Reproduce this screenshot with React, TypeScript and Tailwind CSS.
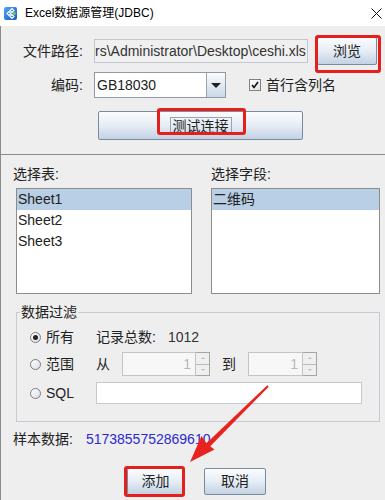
import clsx from "clsx";
import type { ReactNode } from "react";

const font = "font-['Liberation_Sans','Noto_Sans_CJK_SC',sans-serif]";

function Btn({ children, className }: { children: ReactNode; className?: string }) {
  return (
    <div
      className={clsx(
        "flex items-center justify-center border border-[#7b8b9e] rounded-[2px] bg-gradient-to-b from-[#fbfcfd] via-[#e6edf5] to-[#c3d2e4] text-[14px] text-[#222]",
        className
      )}
    >
      {children}
    </div>
  );
}

function Radio({ checked }: { checked?: boolean }) {
  return (
    <span className="w-[11px] h-[11px] rounded-full border border-[#7d7d7d] bg-gradient-to-br from-white to-[#d8dde6] flex items-center justify-center shrink-0">
      {checked && <span className="w-[5px] h-[5px] rounded-full bg-[#222]" />}
    </span>
  );
}

function Spinner({ width }: { width: string }) {
  return (
    <div className={clsx("flex h-[24px]", width)}>
      <div className="flex-1 border border-[#c4c4c4] bg-[#f7f7f7] flex items-center justify-end pr-[4px] text-[14px] text-[#b8b8b8]">
        1
      </div>
      <div className="w-[14px] flex flex-col border border-l-0 border-[#a6a6a6]">
        <div className="flex-1 bg-[#efefef] border-b border-[#b8b8b8] flex items-center justify-center">
          <span className="w-0 h-0 border-x-[2px] border-x-transparent border-b-[2px] border-b-[#c0c0c0]" />
        </div>
        <div className="flex-1 bg-[#efefef] flex items-center justify-center">
          <span className="w-0 h-0 border-x-[2px] border-x-transparent border-t-[2px] border-t-[#c0c0c0]" />
        </div>
      </div>
    </div>
  );
}

export default function App() {
  return (
    <div className={clsx("relative w-[385px] h-[500px] overflow-hidden bg-[#eeeeee] text-[#222] flex flex-col", font)}>
      {/* Title bar */}
      <div className="h-[26px] bg-white flex items-center shrink-0">
        <svg width="13" height="13" viewBox="0 0 13 13" className="ml-[4px]">
          <defs>
            <linearGradient id="ic" x1="0" y1="0" x2="1" y2="1">
              <stop offset="0" stopColor="#4aa8f5" />
              <stop offset="1" stopColor="#1658c8" />
            </linearGradient>
          </defs>
          <rect x="0" y="0" width="13" height="13" rx="2" fill="url(#ic)" />
          <path d="M3 6.5 L5 4.5 L7 6.5 L5 8.5 Z M6 3.5 L8 1.5 L10 3.5 L8 5.5 Z M6 9.5 L8 7.5 L10 9.5 L8 11.5 Z" fill="none" stroke="white" strokeWidth="1.1" />
          <circle cx="10.3" cy="6.5" r="1.4" fill="#86cc45" />
        </svg>
        <span className="ml-[8px] text-[12px] text-black">Excel数据源管理(JDBC)</span>
        <svg width="11" height="11" viewBox="0 0 11 11" className="ml-auto mr-[3px]">
          <path d="M0.5 0.5 L10.5 10.5 M10.5 0.5 L0.5 10.5" stroke="#111" strokeWidth="1" />
        </svg>
      </div>

      <div className="flex-1 flex flex-col border-l border-[#8a8a8a]">
        {/* File path row */}
        <div className="flex items-center h-[28px] mt-[11px]">
          <span className="w-[82px] text-right text-[14px]">文件路径:</span>
          <div className="ml-[11px] w-[214px] h-[24px] border border-[#c2c8cf] bg-[#f0f0f0] flex items-center overflow-hidden whitespace-nowrap text-[14px] text-[#333]">
            rs\Administrator\Desktop\ceshi.xls
          </div>
          <Btn className="ml-[9px] w-[60px] h-[28px]">浏览</Btn>
        </div>

        {/* Encoding row */}
        <div className="flex items-center h-[26px] mt-[7px]">
          <span className="w-[82px] text-right text-[14px]">编码:</span>
          <div className="ml-[11px] w-[132px] h-[26px] flex border border-[#8f9aa8] bg-white">
            <div className="flex-1 flex items-center pl-[2px] text-[14px] text-[#222]">GB18030</div>
            <div className="w-[19px] border-l border-[#9aa6b4] bg-gradient-to-b from-[#fbfcfd] to-[#cbd8e8] flex items-center justify-center">
              <span className="w-0 h-0 border-x-[5px] border-x-transparent border-t-[5px] border-t-[#222]" />
            </div>
          </div>
          <span className="ml-[23px] w-[12px] h-[12px] border border-[#808080] bg-gradient-to-br from-white to-[#dde2ea] flex items-center justify-center">
            <svg width="8" height="8" viewBox="0 0 8 8">
              <path d="M1 4 L3 6.5 L7 1" fill="none" stroke="#111" strokeWidth="1.6" />
            </svg>
          </span>
          <span className="ml-[5px] text-[14px]">首行含列名</span>
        </div>

        {/* Test connection */}
        <Btn className="ml-[97px] mt-[13px] w-[205px] h-[29px]">
          <span className="border border-[#9aa3b3] px-[2px] leading-[16px]">测试连接</span>
        </Btn>

        <div className="mt-[14px] h-px bg-[#868b96]" />

        {/* Lists */}
        <div className="flex mt-[10px]">
          <div className="ml-[12px] flex flex-col">
            <span className="text-[14px] leading-[18px]">选择表:</span>
            <div className="ml-[3px] mt-[5px] w-[176px] h-[106px] border border-[#8d8d8d] bg-white text-[14px]">
              <div className="h-[21px] bg-[#b8cfe5] flex items-center pl-[1px]">Sheet1</div>
              <div className="h-[21px] flex items-center pl-[1px]">Sheet2</div>
              <div className="h-[21px] flex items-center pl-[1px]">Sheet3</div>
            </div>
          </div>
          <div className="ml-[19px] flex flex-col">
            <span className="text-[14px] leading-[18px]">选择字段:</span>
            <div className="mt-[5px] w-[169px] h-[106px] border border-[#8d8d8d] bg-white text-[14px]">
              <div className="h-[21px] bg-[#b8cfe5] flex items-center pl-[1px]">二维码</div>
            </div>
          </div>
        </div>

        {/* Filter group */}
        <fieldset className="ml-[15px] mt-[9px] w-[364px] border border-[#c3ccd6] pb-[17px]">
          <legend className="ml-[3px] px-[1px] text-[14px] leading-[18px]">数据过滤</legend>
          <div className="flex items-center h-[20px] mt-[6px] pl-[13px] text-[14px]">
            <div className="w-[66px] flex items-center gap-[5px]">
              <Radio checked />
              <span>所有</span>
            </div>
            <span>记录总数:</span>
            <span className="ml-[12px] text-[#333]">1012</span>
          </div>
          <div className="flex items-center h-[24px] mt-[5px] pl-[13px] text-[14px]">
            <div className="w-[66px] flex items-center gap-[5px]">
              <Radio />
              <span>范围</span>
            </div>
            <span className="w-[26px]">从</span>
            <Spinner width="w-[88px]" />
            <span className="ml-[12px] w-[26px]">到</span>
            <Spinner width="w-[69px]" />
          </div>
          <div className="flex items-center h-[22px] mt-[6px] pl-[13px] text-[14px]">
            <div className="w-[66px] flex items-center gap-[5px]">
              <Radio />
              <span>SQL</span>
            </div>
            <div className="w-[266px] h-[22px] border border-[#c4c9d0] bg-white" />
          </div>
        </fieldset>

        {/* Sample data */}
        <div className="flex items-center h-[18px] mt-[8px] ml-[12px] text-[14px]">
          <span>样本数据:</span>
          <span className="ml-[13px] text-[#2b2bd0]">5173855752869610</span>
        </div>

        {/* Buttons */}
        <div className="flex mt-[20px] ml-[126px] gap-[20px]">
          <Btn className="w-[57px] h-[27px]">添加</Btn>
          <Btn className="w-[62px] h-[27px]">取消</Btn>
        </div>
      </div>

      {/* Red annotations */}
      <div className="absolute left-[315px] top-[35px] w-[66px] h-[38px] border-[3px] border-[#e3201c] rounded-[3px]" />
      <div className="absolute left-[157px] top-[108px] w-[89px] h-[27px] border-[3px] border-[#e3201c] rounded-[3px]" />
      <div className="absolute left-[124px] top-[466px] w-[61px] h-[31px] border-[3px] border-[#e3201c] rounded-[3px]" />
      <svg className="absolute left-0 top-0 pointer-events-none" width="385" height="500" viewBox="0 0 385 500">
        <polygon points="268.7,386.7 267.3,385.3 204.3,445.2 207.8,448.8" fill="#e8231e" />
        <polygon points="190,462 201.5,436 206.5,443.5 214.5,449.5" fill="#e8231e" />
      </svg>
    </div>
  );
}
